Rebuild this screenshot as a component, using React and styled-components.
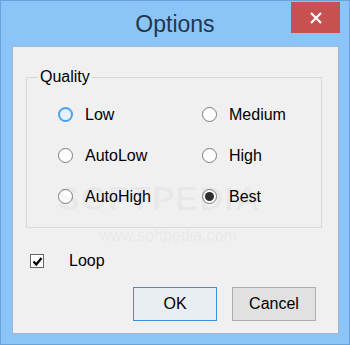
import React from 'react';
import styled, { createGlobalStyle } from 'styled-components';

const GlobalStyle = createGlobalStyle`
  html, body {
    margin: 0;
    padding: 0;
    background: #8bc5f8;
  }
  * {
    box-sizing: border-box;
  }
`;

const OPTIONS = [
  { label: 'Low', focused: true },
  { label: 'Medium' },
  { label: 'AutoLow' },
  { label: 'High' },
  { label: 'AutoHigh' },
  { label: 'Best', checked: true },
];

const App = () => {
  return (
    <>
      <GlobalStyle />
      <Window>
        <TitleBar>
          <span />
          <Title>Options</Title>
          <CloseButton>
            <svg width="12" height="12" viewBox="0 0 12 12">
              <path d="M1 1 L11 11 M11 1 L1 11" stroke="#fff" strokeWidth="2.2" />
            </svg>
          </CloseButton>
        </TitleBar>

        <Client>
          <GroupBox>
            <Legend>Quality</Legend>
            <RadioGrid>
              {OPTIONS.map((opt) => (
                <RadioRow key={opt.label}>
                  <RadioCircle $focused={opt.focused} $checked={opt.checked} />
                  <Label>{opt.label}</Label>
                </RadioRow>
              ))}
            </RadioGrid>
          </GroupBox>

          <CheckRow>
            <CheckBox>
              <svg width="11" height="11" viewBox="0 0 11 11">
                <path d="M1.5 5.5 L4.3 8.5 L9.5 2" stroke="#000" strokeWidth="2.2" fill="none" />
              </svg>
            </CheckBox>
            <Label>Loop</Label>
          </CheckRow>

          <ButtonRow>
            <Button $default>OK</Button>
            <Button>Cancel</Button>
          </ButtonRow>

          <Watermark>SOFTPEDIA<sup>™</sup></Watermark>
          <WatermarkUrl>www.softpedia.com</WatermarkUrl>
        </Client>
      </Window>
    </>
  );
};

export default App;

const Window = styled.div`
  width: 350px;
  height: 345px;
  background: #8bc5f8;
  border: 1px solid #6aa3d8;
  display: flex;
  flex-direction: column;
`;

const TitleBar = styled.div`
  height: 45px;
  display: grid;
  grid-template-columns: 1fr auto 1fr;
  align-items: start;
`;

const Title = styled.div`
  font-family: "Liberation Sans", Arial, sans-serif;
  font-size: 23px;
  color: #22374f;
  line-height: 46px;
`;

const CloseButton = styled.div`
  justify-self: end;
  margin: 1px 9px 0 0;
  width: 49px;
  height: 31px;
  background: #c75050;
  display: flex;
  align-items: center;
  justify-content: center;
`;

const Client = styled.div`
  position: relative;
  margin: 0 10px 0 11px;
  height: 288px;
  background: #f0f0f0;
  border: 1px solid #9fb8d1;
  padding: 20px 0 0 13px;
  font-family: "Liberation Sans", Arial, sans-serif;
  font-size: 16px;
  color: #000;
`;

const GroupBox = styled.fieldset`
  margin: 0;
  width: 296px;
  border: 1px solid #d9d9d9;
  padding: 7px 0 10px 0;
  min-width: 0;
`;

const Legend = styled.legend`
  margin-left: 11px;
  padding: 0 2px;
  line-height: 20px;
  font-size: 16px;
`;

const RadioGrid = styled.div`
  display: grid;
  grid-template-columns: 144px 144px;
  grid-auto-rows: 41px;
  padding-left: 31px;
`;

const RadioRow = styled.div`
  display: flex;
  align-items: center;
  gap: 12px;
`;

const RadioCircle = styled.span`
  width: 15px;
  height: 15px;
  border-radius: 50%;
  border: ${(p) => (p.$focused ? '2px solid #49a2f2' : '1px solid #7a7a7a')};
  background: ${(p) => (p.$focused ? '#e8f2fd' : '#fff')};
  display: flex;
  align-items: center;
  justify-content: center;
  flex-shrink: 0;

  &::after {
    content: '';
    display: ${(p) => (p.$checked ? 'block' : 'none')};
    width: 9px;
    height: 9px;
    border-radius: 50%;
    background: #2e2e2e;
  }
`;

const Label = styled.span`
  line-height: 20px;
`;

const CheckRow = styled.div`
  display: flex;
  align-items: center;
  gap: 25px;
  margin: 23px 0 0 4px;
  height: 20px;
`;

const CheckBox = styled.span`
  width: 14px;
  height: 14px;
  border: 1px solid #666;
  background: #fff;
  display: flex;
  align-items: center;
  justify-content: center;
`;

const ButtonRow = styled.div`
  display: flex;
  justify-content: flex-end;
  gap: 15px;
  margin-top: 16px;
  padding-right: 22px;
`;

const Button = styled.div`
  width: 84px;
  height: 34px;
  display: flex;
  align-items: center;
  justify-content: center;
  background: ${(p) => (p.$default ? '#e9eef3' : '#e1e1e1')};
  border: 1px solid ${(p) => (p.$default ? '#3c8fe0' : '#adadad')};
  font-size: 16px;
`;

const Watermark = styled.div`
  position: absolute;
  left: 44px;
  top: 132px;
  font-size: 34px;
  font-weight: bold;
  letter-spacing: 1px;
  color: rgba(0, 0, 0, 0.035);
  pointer-events: none;

  sup {
    font-size: 10px;
  }
`;

const WatermarkUrl = styled.div`
  position: absolute;
  left: 86px;
  top: 180px;
  font-size: 16px;
  color: rgba(0, 0, 0, 0.05);
  pointer-events: none;
`;
